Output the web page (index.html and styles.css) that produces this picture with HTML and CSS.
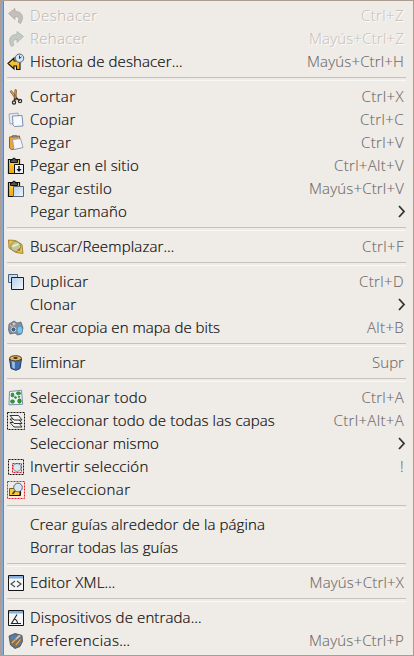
FILE: index.html
```html
<!DOCTYPE html>
<html lang="es">
<head>
<meta charset="utf-8">
<title>Editar</title>
<link rel="stylesheet" href="styles.css">
</head>
<body>
<svg width="0" height="0" class="defs">
<defs>
<linearGradient id="pane" x1="0" y1="0" x2="1" y2="1"><stop offset="0" stop-color="#b4d0ea"/><stop offset="1" stop-color="#f0f6fb"/></linearGradient>
<linearGradient id="gold" x1="0" y1="0" x2="0" y2="1"><stop offset="0" stop-color="#fbd84e"/><stop offset="1" stop-color="#f2a50c"/></linearGradient>
<symbol id="undo" viewBox="0 0 18 18"><path d="M1.500 6.500 8 1.500v3c7-.5 9.500 6 5.500 12l-2.500-1.500c2-4 .5-5.500-3-5.500v3z" fill="#c5bfbb" stroke="#aaa39f" stroke-width=".7"/></symbol>
<symbol id="redo" viewBox="0 0 18 18"><path d="M16.500 6.500 10 1.500v3c-7-.5-9.500 6-5.500 12l2.500-1.500c-2-4-.5-5.500 3-5.500v3z" fill="#c3cac5" stroke="#a6aea9" stroke-width=".7"/></symbol>
<symbol id="history" viewBox="0 0 18 18"><path d="M1 10.500 7 5v3h6v8.500H9.500V13H7v3z" fill="url(#gold)" stroke="#111" stroke-width="1.100"/><circle cx="12.500" cy="5.200" r="4.200" fill="#d6e7f7" stroke="#53657b"/><path d="M12.500 2.500v3l2-1.500" fill="none" stroke="#222" stroke-width=".9"/></symbol>
<symbol id="cut" viewBox="0 0 18 18"><path d="m3 3.500 1.500-1L11 11l-1.500 1zM8 1.500l1.500.5-.5 9.500-2 .5z" fill="#e99d3e" stroke="#76502d" stroke-width=".7"/><path d="m9 10 4 2.500M8 10.500 7.500 13" stroke="#222" stroke-width="1.300"/><circle cx="7" cy="14.500" r="1.600" fill="none" stroke="#222" stroke-width="1.200"/><circle cx="13" cy="13" r="1.700" fill="none" stroke="#333" stroke-width="1.200"/></symbol>
<symbol id="copy" viewBox="0 0 18 18"><path d="m2 3 9-1 1 10-9 1z" fill="#e4ebf5" stroke="#8d9bb4" stroke-width=".8"/><path d="m5.500 5 9.500-.5 1 10.500-8.500.5L6 14z" fill="#f6f9fd" stroke="#7184a6" stroke-width=".9"/></symbol>
<symbol id="paste" viewBox="0 0 18 18"><path d="m2.500 3 10-1 1 12-9 1.500-2-1.500z" fill="#e9a83e" stroke="#b34a27"/><path d="m5 3 .5-1.500h4l1 1.500z" fill="#999" stroke="#555" stroke-width=".6"/><path d="m5.500 5.500 8-1L16 13.500l-9 2z" fill="#f3f6fa" stroke="#8693a9" stroke-width=".8"/></symbol>
<symbol id="board" viewBox="0 0 18 18"><path d="M1.500 2.500h11v14h-11z" fill="url(#gold)" stroke="#111" stroke-width="1.200"/><path d="M3.500 5.500V3h2L6 1.300h2L8.500 3h2v2.500z" fill="#555" stroke="#111"/></symbol>
<symbol id="place" viewBox="0 0 18 18"><use href="#board"/><path d="M7.500 7.500h9v9h-9z" fill="#eef1f5" stroke="#111"/><path d="M12 9v4.500" stroke="#111" stroke-width="1.400"/><path d="M9.500 12h5L12 15z" fill="#111"/></symbol>
<symbol id="style" viewBox="0 0 18 18"><use href="#board"/><path d="M6.500 6.500h10v10h-10z" fill="url(#pane)" stroke="#52677f"/></symbol>
<symbol id="find" viewBox="0 0 18 18"><path d="m1.500 2 7 .5 6.500 4 1 9-7-1L2 10z" fill="#e8c33f" stroke="#94721e" stroke-width=".8"/><circle cx="8.700" cy="8.500" r="5" fill="#c3c893" stroke="#85804d" stroke-width=".8"/><path d="M5.500 8.500 11.500 6" stroke="#eff0d2" stroke-width="1.400"/><path d="m10 12 3-2v3z" fill="#e0432a"/></symbol>
<symbol id="duplicate" viewBox="0 0 18 18"><path d="M1.500 1.500h9v8h-9z" fill="url(#pane)" stroke="#4b6580"/><path d="M4.500 4.500h12v12h-12z" fill="url(#pane)" stroke="#17202b"/></symbol>
<symbol id="bitmap" viewBox="0 0 18 18"><path d="m2 5 5-3 3 2 4-1 2 6-1.500 6-4 1L8 14l-5 1-1.500-4z" fill="#7f909f" stroke="#4f5e6e" stroke-width=".7"/><path d="m3 6 4-2.500L9 5 4 8z" fill="#c6d0d8"/><circle cx="5" cy="5.800" r="1.100" fill="#d4643d"/><circle cx="6.500" cy="10.500" r="2.400" fill="#4a6078" stroke="#c3d0dc"/><ellipse cx="12.800" cy="11" rx="2.800" ry="4" fill="#79c4ee" stroke="#477ba5" stroke-width=".6"/></symbol>
<symbol id="delete" viewBox="0 0 18 18"><path d="m2.500 5 1.500 9.500 5 1.800 4-1.800L14.500 5z" fill="#3f6eb0" stroke="#28395b"/><path d="m4.800 7 .7 7 2.300.8V8z" fill="#9bc0e8"/><ellipse cx="8.500" cy="4.300" rx="6" ry="2.600" fill="#e5b55b" stroke="#4b3920"/><ellipse cx="8.500" cy="4" rx="2.200" ry="1" fill="#3c2c1a"/></symbol>
<symbol id="all" viewBox="0 0 18 18"><path d="m2.500 2.500 12-1.200 1.200 14-13.700.5z" fill="#eef2f8" stroke="#7084a4" stroke-width=".9"/><g fill="#2ba129" stroke="#176f21" stroke-width=".6"><ellipse cx="5.500" cy="6" rx="1.500" ry="2"/><ellipse cx="11.500" cy="4.300" rx="2.100" ry="1.500"/><circle cx="8.500" cy="8.500" r="1"/><ellipse cx="5.500" cy="12.500" rx="2" ry="1.700"/><ellipse cx="12.500" cy="12" rx="1.800" ry="2.200"/><circle cx="12" cy="7.800" r=".8"/></g></symbol>
<symbol id="layers" viewBox="0 0 18 18"><path d="M.5.5h17v17H.5z" fill="none" stroke="#111" stroke-dasharray="2 1"/><g fill="#f6f6f5" stroke="#333" stroke-width="1"><path d="M3 10.500h8.500l3.500 4.500H7z"/><path d="M3 7h8.500l3.500 4.500H7z"/><path d="M3 3.500h8.500L15 8H7z"/></g></symbol>
<symbol id="invert" viewBox="0 0 18 18"><path d="M1.500 1.500h15v15h-15z" fill="none" stroke="#111" stroke-dasharray="2 1"/><circle cx="10" cy="9.500" r="4" fill="#dbe7f0" stroke="#8298ad"/><path d="M5.500 5.500h9v9h-9z" fill="none" stroke="#e5101c" stroke-dasharray="2 1"/></symbol>
<symbol id="deselect" viewBox="0 0 18 18"><path d="M.5.5h17v17H.5z" fill="none" stroke="#ee1722" stroke-dasharray="2 1"/><path d="M2.500 7.500h10v7h-10z" fill="#f8c936" stroke="#7c610c"/><path d="M13.500 10v4.500h-11" fill="none" stroke="#111"/><circle cx="11" cy="6.500" r="4.300" fill="#d9e6f2" stroke="#56657a"/><path d="m8 10-2.500 3" stroke="#333" stroke-width="1.500"/></symbol>
<symbol id="window" viewBox="0 0 18 18"><path d="M1.500 1.500h15v15h-15z" fill="#f5f6f7" stroke="#111"/><path d="M2 2h14v2.500H2z" fill="#85aedb"/></symbol>
<symbol id="xml" viewBox="0 0 18 18"><use href="#window"/><path d="M8 7 4 10l4 3m2-6 4 3-4 3" fill="none" stroke="#444" stroke-width="1.100"/></symbol>
<symbol id="input" viewBox="0 0 18 18"><use href="#window"/><path d="M10 5.500 4.500 14.500H14M7 10c2.500.5 3.500 2 3.500 4.500" fill="none" stroke="#222" stroke-width="1.100"/></symbol>
<symbol id="prefs" viewBox="0 0 18 18"><path d="m2 4 6-2.500L15 3.500l.5 6-2.500 5L8 16.500 3.500 13z" fill="#6c7377" stroke="#47494a" stroke-width=".8"/><path d="m3.500 4.500 7-1.500L5 9zM8 14l6-7-.5 5z" fill="#3f86cb"/><path d="m4 10.500 4-4 1.500 1.500-4 4zM8 12.500l5-6 1.500 1-5 6.500z" fill="#f0a044" stroke="#725332" stroke-width=".5"/><path d="m8 6.500 4-4 2.500 1.500L9.500 8" fill="#c5cbd0" stroke="#5c6268" stroke-width=".6"/></symbol>
</defs>
</svg>
<main class="menu" id="menu"></main>
<script src="menu.js"></script>
</body>
</html>
```
FILE: styles.css
```css
* { box-sizing: border-box; }
body { margin: 0; background: #efebe7; overflow: hidden; }
.defs { display: block; width: 0; height: 0; position: absolute; }
.menu {
  width: 414px;
  height: 656px;
  padding: 3px 7px 0 3px;
  background: #efebe7;
  border: 1px solid #ad9d90;
  box-shadow: inset 2px 0 #85a8da, inset 3px 0 #6688b7;
  font: 300 15px/23px "Open Sans", "Noto Sans", sans-serif;
  color: #0c0c0c;
  -webkit-text-stroke: 0.2px;
}
.row { display: flex; align-items: center; height: 23px; padding: 0 2px 0 3px; white-space: nowrap; }
.icon { flex: none; width: 18px; height: 18px; }
.label { margin-left: 5px; }
.key { margin-left: auto; color: #6b6967; -webkit-text-stroke: 0.1px; }
.label, .key { display: block; height: 23px; }
.disabled .label, .disabled .key { color: #c3bfbb; text-shadow: 1px 1px #fff; -webkit-text-stroke: 0; }
.disabled .label { color: #b9b5b1; }
.arrow { width: 8px; height: 13px; margin: 0 -2px 0 auto; fill: none; stroke: #333; stroke-width: 1.8; }
.separator { height: 12px; padding: 4px 0 0 3px; }
.separator::before { content: ""; display: block; height: 2px; border-top: 1px solid #c9c0b9; border-bottom: 1px solid #faf8f6; }
```
FILE: menu.js
```js
// Entries: icon, label, label width, shortcut, shortcut width, disabled flag.
const entries = [
  ["undo", "Deshacer", 67.5, "Ctrl+Z", 43, true],
  ["redo", "Rehacer", 57.5, "Mayús+Ctrl+Z", 95, true],
  ["history", "Historia de deshacer…", 152.5, "Mayús+Ctrl+H", 97],
  null,
  ["cut", "Cortar", 45.5, "Ctrl+X", 42.5],
  ["copy", "Copiar", 45.5, "Ctrl+C", 44],
  ["paste", "Pegar", 41.5, "Ctrl+V", 43],
  ["place", "Pegar en el sitio", 109, "Ctrl+Alt+V", 70],
  ["style", "Pegar estilo", 82, "Mayús+Ctrl+V", 95],
  ["", "Pegar tamaño", 97, ">"],
  null,
  ["find", "Buscar/Reemplazar…", 144.5, "Ctrl+F", 42],
  null,
  ["duplicate", "Duplicar", 58.5, "Ctrl+D", 45],
  ["", "Clonar", 46.5, ">"],
  ["bitmap", "Crear copia en mapa de bits", 190, "Alt+B", 37],
  null,
  ["delete", "Eliminar", 55.5, "Supr", 32],
  null,
  ["all", "Seleccionar todo", 117, "Ctrl+A", 42.5],
  ["layers", "Seleccionar todo de todas las capas", 245, "Ctrl+Alt+A", 70.5],
  ["", "Seleccionar mismo", 129, ">"],
  ["invert", "Invertir selección", 118.5, "!", 4],
  ["deselect", "Deseleccionar", 100.5],
  null,
  ["", "Crear guías alrededor de la página", 235],
  ["", "Borrar todas las guías", 148],
  null,
  ["xml", "Editor XML…", 85.5, "Mayús+Ctrl+X", 94.5],
  null,
  ["input", "Dispositivos de entrada…", 171.5],
  ["prefs", "Preferencias…", 100.5, "Mayús+Ctrl+P", 95]
];
const menu = document.getElementById("menu");
function text(row, cls, value, width) {
  const span = document.createElement("span");
  span.className = cls;
  span.textContent = value;
  row.append(span);
  const natural = span.getBoundingClientRect().width;
  span.style.letterSpacing = (width - natural) / value.length + "px";
}
for (const entry of entries) {
  const row = document.createElement("div");
  menu.append(row);
  if (!entry) { row.className = "separator"; continue; }
  const [icon, label, width, key, keyWidth, disabled] = entry;
  row.className = disabled ? "row disabled" : "row";
  row.innerHTML = `<svg class="icon">${icon ? `<use href="#${icon}"/>` : ""}</svg>`;
  text(row, "label", label, width);
  if (key === ">") row.insertAdjacentHTML("beforeend", '<svg class="arrow" viewBox="0 0 8 13"><path d="m1 1 5 5.500L1 12"/></svg>');
  else if (key) text(row, "key", key, keyWidth);
}
```
